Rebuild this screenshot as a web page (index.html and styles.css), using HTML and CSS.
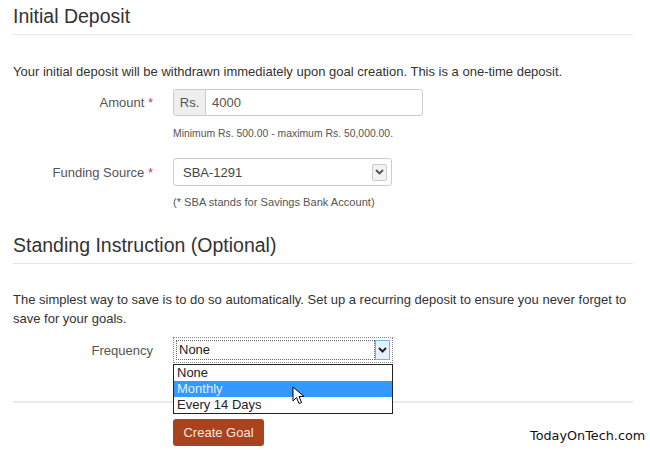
FILE: index.html
```html
<!DOCTYPE html>
<html>
<head>
<meta charset="utf-8">
<link rel="stylesheet" href="styles.css">
</head>
<body>
<div class="page">
  <h2 class="legend first">Initial Deposit</h2>
  <p class="intro">Your initial deposit will be withdrawn immediately upon goal creation. This is a one-time deposit.</p>

  <div class="row amount-row">
    <div class="label">Amount <span class="req">*</span></div>
    <div class="ctl">
      <div class="igroup">
        <span class="addon">Rs.</span>
        <span class="ival">4000</span>
      </div>
      <div class="help help-min">Minimum Rs. 500.00 - maximum Rs. 50,000.00.</div>
    </div>
  </div>

  <div class="row fund-row">
    <div class="label">Funding Source <span class="req">*</span></div>
    <div class="ctl">
      <div class="select">
        <span class="sval">SBA-1291</span>
        <span class="sarrow"><svg width="9" height="6" viewBox="0 0 9 6"><path d="M1 1 L4.5 4.5 L8 1" fill="none" stroke="#555" stroke-width="1.8"/></svg></span>
      </div>
      <div class="help help-sba">(* SBA stands for Savings Bank Account)</div>
    </div>
  </div>

  <h2 class="legend second">Standing Instruction (Optional)</h2>
  <p class="intro2">The simplest way to save is to do so automatically. Set up a recurring deposit to ensure you never forget to save for your goals.</p>

  <div class="row freq-row">
    <div class="label">Frequency</div>
    <div class="ctl">
      <div class="fselect">
        <div class="finner">
          <span class="fval">None</span>
          <span class="farrow"><svg width="9" height="6" viewBox="0 0 9 6"><path d="M1 1 L4.5 4.5 L8 1" fill="none" stroke="#222" stroke-width="2"/></svg></span>
        </div>
        <ul class="options">
          <li>None</li>
          <li class="hl">Monthly</li>
          <li>Every 14 Days</li>
        </ul>
        <svg class="cursor" width="14" height="20" viewBox="0 0 14 20"><path d="M1 1 L1 15 L4.5 11.5 L7 17.5 L9.5 16.5 L7 10.5 L12 10.5 Z" fill="#fff" stroke="#000" stroke-width="1"/></svg>
      </div>
    </div>
  </div>

  <div class="actions">
    <div class="spacer"></div>
    <span class="btn">Create Goal</span>
  </div>
</div>
<div class="watermark">TodayOnTech.com</div>
</body>
</html>
```

FILE: styles.css
```css
html, body {
  margin: 0;
  padding: 0;
  background: #fff;
}
body {
  font-family: "Liberation Sans", Arial, sans-serif;
  color: #333;
  width: 650px;
  height: 450px;
  overflow: hidden;
  position: relative;
}
.page {
  padding: 0 17px 0 13px;
}
.legend {
  margin: 0;
  font-size: 19.5px;
  font-weight: normal;
  line-height: 22px;
  color: #333;
  padding-bottom: 7px;
  border-bottom: 1px solid #e5e5e5;
}
.legend.first {
  padding-top: 5px;
}
.legend.second {
  margin-top: 25px;
}
.intro {
  margin: 27px 0 8px;
  font-size: 13px;
  line-height: 19px;
}
.intro2 {
  margin: 26px 0 9px;
  font-size: 13px;
  line-height: 19px;
}
.row {
  display: grid;
  grid-template-columns: 140px 1fr;
  column-gap: 20px;
}
.label {
  text-align: right;
  font-size: 13px;
  color: #555;
  line-height: 28px;
}
.req {
  color: #b94a48;
}
.igroup {
  display: flex;
  width: 250px;
  height: 27px;
  box-sizing: border-box;
  border: 1px solid #ccc;
  border-radius: 3px;
  overflow: hidden;
}
.addon {
  width: 31px;
  background: #eee;
  border-right: 1px solid #ccc;
  font-size: 13px;
  line-height: 25px;
  text-align: center;
  color: #555;
}
.ival {
  padding-left: 6px;
  font-size: 13px;
  line-height: 25px;
  color: #555;
}
.help {
  color: #555;
}
.help-min {
  font-size: 10.4px;
  line-height: 14px;
  margin-top: 11px;
}
.fund-row {
  margin-top: 17px;
}
.fund-row .label {
  line-height: 29px;
}
.select {
  display: flex;
  align-items: center;
  justify-content: space-between;
  width: 219px;
  height: 28px;
  box-sizing: border-box;
  border: 1px solid #ccc;
  border-radius: 3px;
  padding: 0 4px 0 9px;
}
.sval {
  font-size: 13px;
  color: #444;
}
.sarrow {
  width: 15px;
  height: 17px;
  box-sizing: border-box;
  border: 1px solid #ccc;
  border-radius: 2px;
  background: #f2f2f2;
  display: flex;
  align-items: center;
  justify-content: center;
}
.help-sba {
  font-size: 11.1px;
  line-height: 14px;
  margin-top: 9px;
}
.freq-row .label {
  line-height: 27px;
}
.fselect {
  position: relative;
  width: 220px;
  height: 26px;
  box-sizing: border-box;
  border: 1px dotted #888;
  padding: 2px;
}
.finner {
  display: flex;
  height: 20px;
}
.fval {
  flex: 1;
  border: 1px dotted #666;
  font-size: 13px;
  line-height: 18px;
  padding-left: 2px;
  color: #222;
}
.farrow {
  width: 15px;
  box-sizing: border-box;
  border: 1px solid #7ab0e6;
  background: #e6f1fc;
  display: flex;
  align-items: center;
  justify-content: center;
}
.options {
  position: absolute;
  left: -1px;
  top: 26px;
  width: 220px;
  box-sizing: border-box;
  margin: 0;
  padding: 0;
  list-style: none;
  border: 1px solid #222;
  background: #fff;
  z-index: 2;
}
.options li {
  font-size: 13px;
  line-height: 16px;
  padding-left: 3px;
  color: #222;
}
.options li.hl {
  background: #3399ff;
  color: #e0efff;
}
.cursor {
  position: absolute;
  left: 118px;
  top: 48px;
  z-index: 3;
}
.actions {
  margin-top: 37px;
  border-top: 2px solid #eaeaea;
  padding-top: 16px;
  display: grid;
  grid-template-columns: 140px 1fr;
  column-gap: 20px;
  align-items: start;
}
.btn {
  justify-self: start;
  display: inline-block;
  width: 91px;
  height: 27px;
  box-sizing: border-box;
  background: #a8431e;
  border-radius: 3px;
  color: #f3e6e0;
  font-size: 13px;
  line-height: 27px;
  text-align: center;
}
.watermark {
  position: absolute;
  left: 530px;
  top: 428px;
  font-family: "DejaVu Sans", Verdana, sans-serif;
  font-size: 12.8px;
  color: #111;
}
```
